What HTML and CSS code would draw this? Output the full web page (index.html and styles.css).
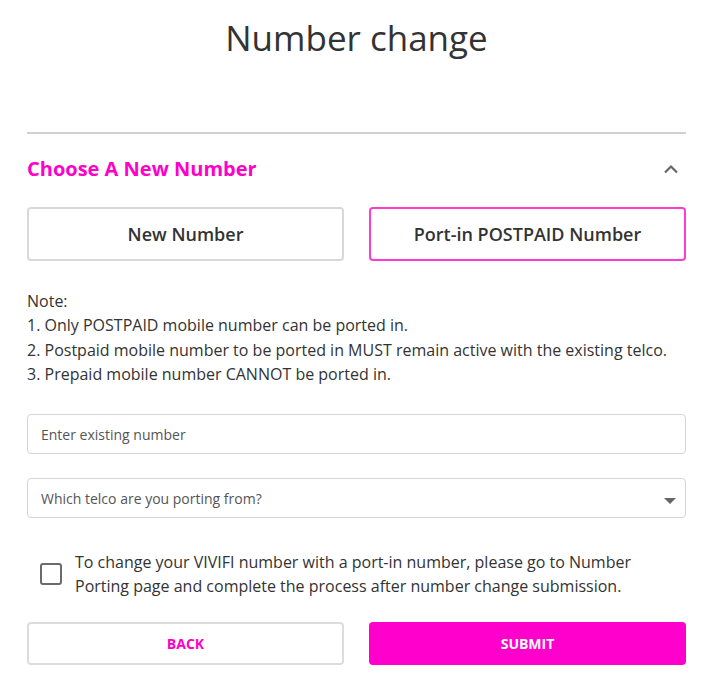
FILE: index.html
```html
<!DOCTYPE html>
<html>
<head>
<meta charset="utf-8">
<link rel="stylesheet" href="styles.css">
</head>
<body>
<div class="page">
  <h1 class="title">Number change</h1>
  <div class="section">
    <div class="section-head">
      <h2 class="section-title">Choose A New Number</h2>
      <svg class="chevron" width="16" height="10" viewBox="0 0 16 10"><path d="M2 8.5 L8 2.5 L14 8.5" fill="none" stroke="#666" stroke-width="2.2"/></svg>
    </div>
    <div class="choice-row">
      <button class="choice">New Number</button>
      <button class="choice active">Port-in POSTPAID Number</button>
    </div>
    <div class="note">
      <p>Note:</p>
      <p>1. Only POSTPAID mobile number can be ported in.</p>
      <p>2. Postpaid mobile number to be ported in MUST remain active with the existing telco.</p>
      <p>3. Prepaid mobile number CANNOT be ported in.</p>
    </div>
    <div class="field">Enter existing number</div>
    <div class="field select">Which telco are you porting from?<span class="caret"></span></div>
    <label class="check-row">
      <span class="checkbox"></span>
      <span class="check-text">To change your VIVIFI number with a port-in number, please go to Number Porting page and complete the process after number change submission.</span>
    </label>
    <div class="actions">
      <button class="btn back">BACK</button>
      <button class="btn submit">SUBMIT</button>
    </div>
  </div>
</div>
</body>
</html>
```

FILE: styles.css
```css
html, body {
  margin: 0;
  padding: 0;
  background: #fff;
}
body {
  font-family: "Open Sans", "Noto Sans", sans-serif;
  color: #333;
}
.page {
  margin: 0 15px 0 27px;
}
.title {
  margin: 0;
  padding-top: 13px;
  height: 134px;
  box-sizing: border-box;
  font-size: 35px;
  font-weight: 400;
  line-height: 50px;
  text-align: center;
  color: #333;
  border-bottom: 2px solid #d0d0d0;
}
.section-head {
  display: flex;
  align-items: center;
  justify-content: space-between;
  height: 73px;
  padding-bottom: 4px;
  box-sizing: border-box;
}
.section-title {
  margin: 0;
  font-size: 20px;
  font-weight: 700;
  color: #ff00c8;
}
.chevron {
  margin-right: 7px;
}
.choice-row {
  display: grid;
  grid-template-columns: 1fr 1fr;
  gap: 25px;
}
.choice {
  height: 54px;
  background: #fff;
  border: 2px solid #d8d8d8;
  border-radius: 4px;
  font-family: inherit;
  font-size: 18px;
  font-weight: 600;
  color: #333;
}
.choice.active {
  border-color: #ff3ccf;
}
.note {
  margin-top: 28px;
  font-size: 16px;
  line-height: 24.3px;
}
.note p {
  margin: 0;
}
.field {
  margin-top: 28px;
  height: 40px;
  box-sizing: border-box;
  border: 1px solid #d4d4d4;
  border-radius: 4px;
  padding: 0 13px;
  display: flex;
  align-items: center;
  font-size: 14px;
  color: #555;
  position: relative;
}
.field.select {
  margin-top: 24px;
}
.caret {
  position: absolute;
  right: 9px;
  top: 19px;
  width: 0;
  height: 0;
  border-left: 6px solid transparent;
  border-right: 6px solid transparent;
  border-top: 6px solid #666;
}
.check-row {
  display: flex;
  align-items: center;
  margin-top: 32px;
  padding-left: 13px;
}
.checkbox {
  flex: none;
  width: 18px;
  height: 18px;
  border: 2px solid #6b6b6b;
  border-radius: 3px;
  margin-right: 13px;
}
.check-text {
  font-size: 16px;
  line-height: 24px;
}
.actions {
  display: grid;
  grid-template-columns: 1fr 1fr;
  gap: 25px;
  margin-top: 24px;
}
.btn {
  height: 43px;
  border-radius: 4px;
  font-family: inherit;
  font-size: 14px;
  font-weight: 700;
}
.btn.back {
  background: #fff;
  border: 2px solid #dcdcdc;
  color: #ff00c8;
}
.btn.submit {
  background: #ff00cc;
  border: none;
  color: #fff;
}
```
